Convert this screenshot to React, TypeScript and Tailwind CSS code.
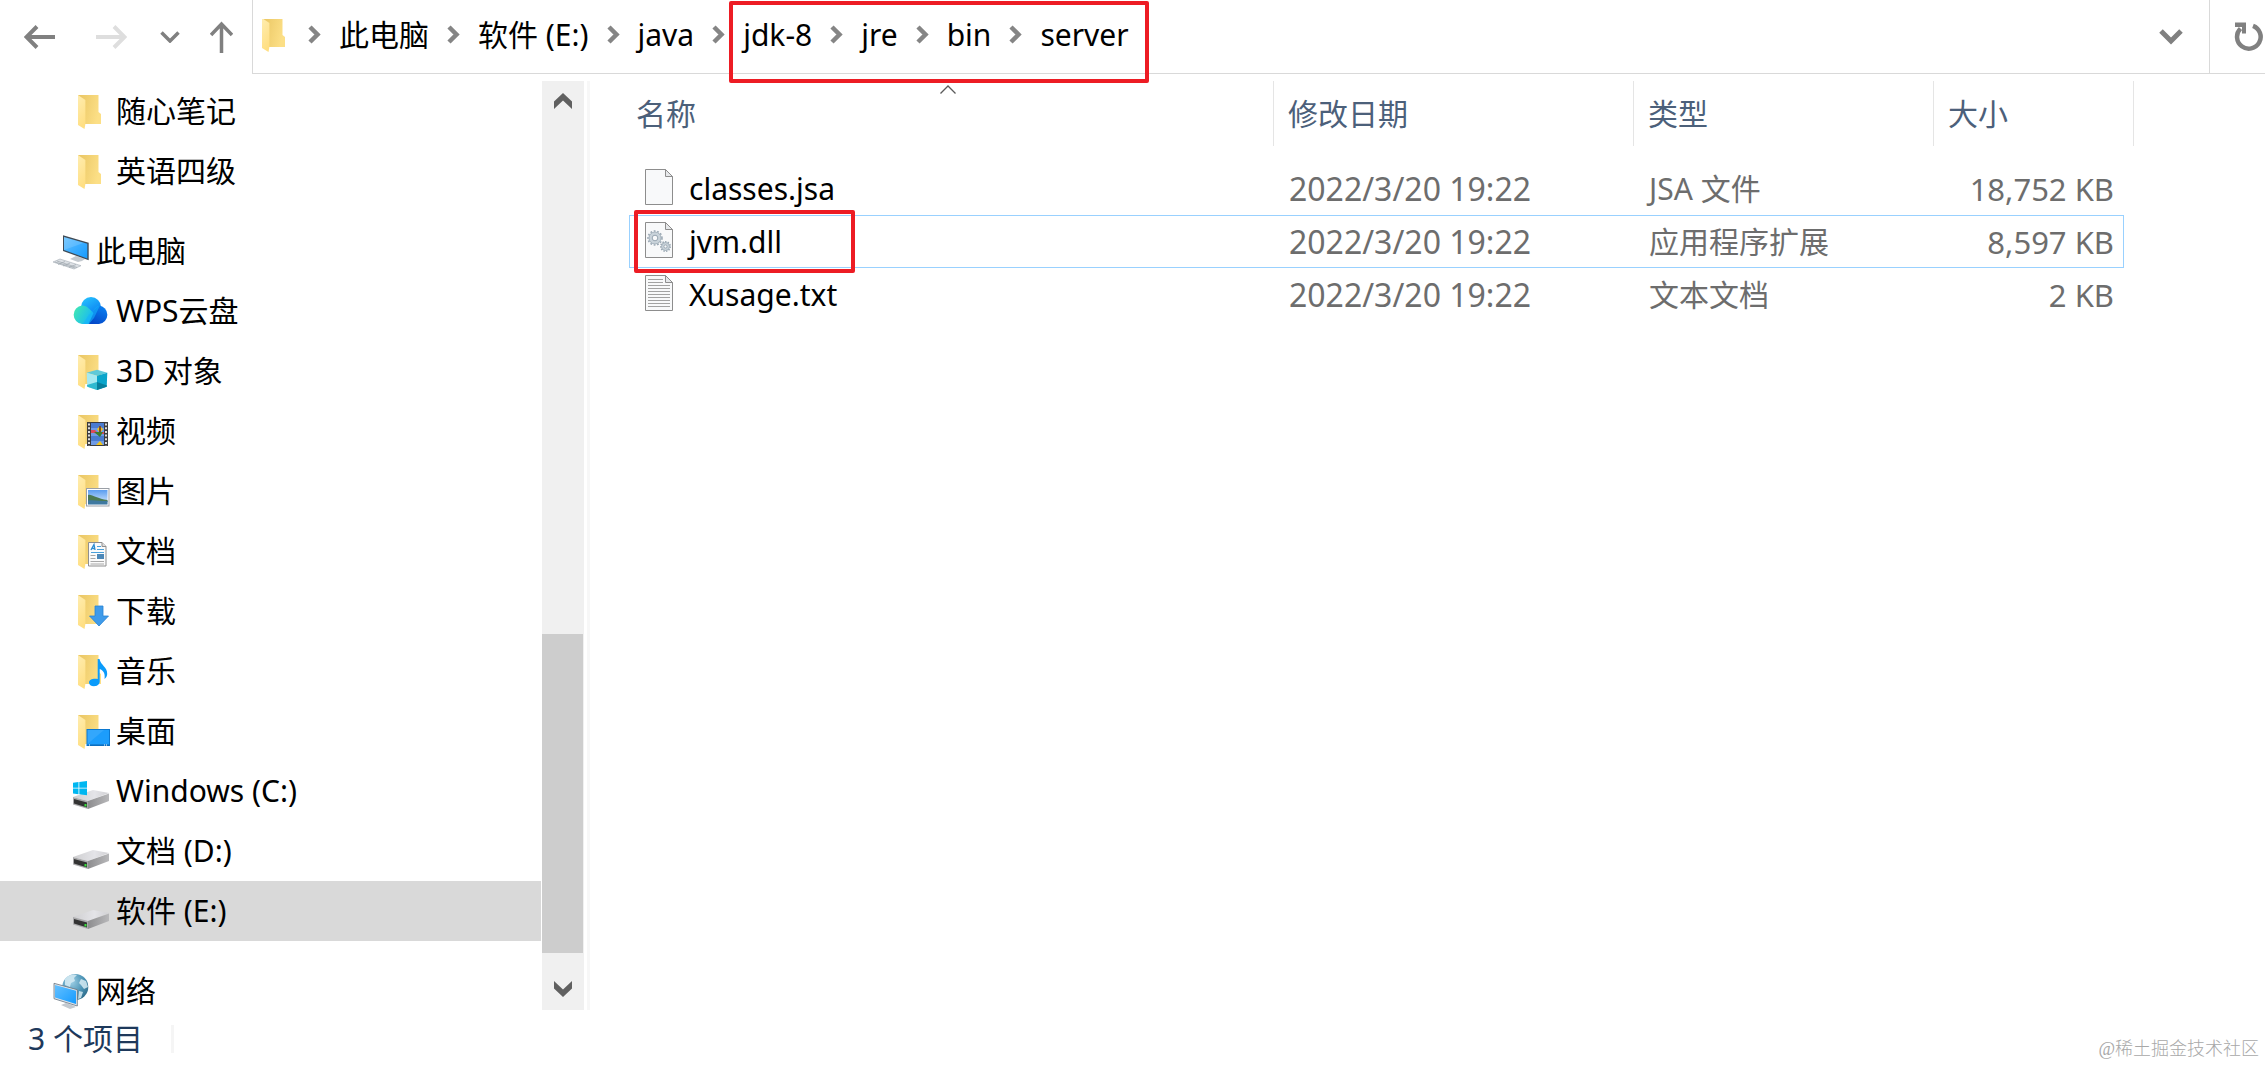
import type { ReactNode } from 'react'
import { clsx } from 'clsx'

type IconName =
  | 'folder'
  | 'pc'
  | 'cloud'
  | 'objects'
  | 'video'
  | 'pictures'
  | 'documents'
  | 'downloads'
  | 'music'
  | 'desktop'
  | 'windows'
  | 'drive'
  | 'network'

interface TreeItem {
  label: string
  icon: IconName
  root?: boolean
  active?: boolean
}

interface FileRow {
  name: string
  kind: 'blank' | 'gears' | 'text'
  date: string
  type: string
  size: string
  focused?: boolean
}

const treeGroups: TreeItem[][] = [
  [
    { label: '随心笔记', icon: 'folder' },
    { label: '英语四级', icon: 'folder' },
  ],
  [
    { label: '此电脑', icon: 'pc', root: true },
    { label: 'WPS云盘', icon: 'cloud' },
    { label: '3D 对象', icon: 'objects' },
    { label: '视频', icon: 'video' },
    { label: '图片', icon: 'pictures' },
    { label: '文档', icon: 'documents' },
    { label: '下载', icon: 'downloads' },
    { label: '音乐', icon: 'music' },
    { label: '桌面', icon: 'desktop' },
    { label: 'Windows (C:)', icon: 'windows' },
    { label: '文档 (D:)', icon: 'drive' },
    { label: '软件 (E:)', icon: 'drive', active: true },
  ],
  [{ label: '网络', icon: 'network', root: true }],
]

const files: FileRow[] = [
  { name: 'classes.jsa', kind: 'blank', date: '2022/3/20 19:22', type: 'JSA 文件', size: '18,752 KB' },
  { name: 'jvm.dll', kind: 'gears', date: '2022/3/20 19:22', type: '应用程序扩展', size: '8,597 KB', focused: true },
  { name: 'Xusage.txt', kind: 'text', date: '2022/3/20 19:22', type: '文本文档', size: '2 KB' },
]

function Gradients() {
  return (
    <svg className="absolute size-0" aria-hidden="true">
      <defs>
        <linearGradient id="flap" x1="0" y1="0" x2="0.3" y2="1">
          <stop offset="0" stopColor="#ffedb0" />
          <stop offset="1" stopColor="#ffdf83" />
        </linearGradient>
        <linearGradient id="back" x1="0" y1="0" x2="1" y2="0.3">
          <stop offset="0" stopColor="#e9c562" />
          <stop offset="1" stopColor="#fcdf86" />
        </linearGradient>
        <linearGradient id="screen" x1="0" y1="0" x2="1" y2="1">
          <stop offset="0" stopColor="#63c0ff" />
          <stop offset="1" stopColor="#159bff" />
        </linearGradient>
        <linearGradient id="cloudTop" x1="0" y1="0" x2="0.6" y2="1">
          <stop offset="0" stopColor="#28c8ff" />
          <stop offset="1" stopColor="#0a7df2" />
        </linearGradient>
        <linearGradient id="cloudRight" x1="1" y1="0" x2="0.4" y2="1">
          <stop offset="0" stopColor="#0a86f5" />
          <stop offset="1" stopColor="#0447c8" />
        </linearGradient>
        <linearGradient id="cloudLeft" x1="0" y1="0.2" x2="1" y2="0.7">
          <stop offset="0" stopColor="#41e8b2" />
          <stop offset="1" stopColor="#14b4fb" />
        </linearGradient>
        <linearGradient id="driveTop" x1="0" y1="0" x2="1" y2="0">
          <stop offset="0" stopColor="#cfcfd1" />
          <stop offset="0.6" stopColor="#e4e4e8" />
          <stop offset="1" stopColor="#d0d0d3" />
        </linearGradient>
        <linearGradient id="driveSide" x1="0" y1="0" x2="1" y2="0">
          <stop offset="0" stopColor="#8d8d8f" />
          <stop offset="1" stopColor="#b8b8ba" />
        </linearGradient>
        <linearGradient id="sky" x1="0" y1="0" x2="0" y2="1">
          <stop offset="0" stopColor="#5a9df0" />
          <stop offset="1" stopColor="#dcecff" />
        </linearGradient>
        <radialGradient id="globe" cx="0.35" cy="0.3" r="0.8">
          <stop offset="0" stopColor="#9fd0e6" />
          <stop offset="0.6" stopColor="#4b93b5" />
          <stop offset="1" stopColor="#2a6784" />
        </radialGradient>
      </defs>
    </svg>
  )
}

function FolderBase({ children }: { children?: ReactNode }) {
  return (
    <>
      <path d="M6 4H26.5V21L29 23V33H13L6 30Z" fill="url(#back)" />
      <path d="M6 4L13.4 9V33L12.5 38L6 34Z" fill="url(#flap)" />
      {children}
    </>
  )
}

function DriveBase() {
  return (
    <>
      <path d="M1 26L21 19L37 22L16 30Z" fill="url(#driveTop)" />
      <path d="M16 30L37 22.5V30L16 38Z" fill="url(#driveSide)" />
      <path d="M1 26L16 30V38L1 33.5Z" fill="#a9a9ab" />
      <path d="M2 28L15 31.5V36.5L2 32.5Z" fill="#333" />
      <rect x="12.5" y="33" width="2" height="2.5" fill="#37e03b" />
    </>
  )
}

const drawings: Record<IconName, ReactNode> = {
  folder: <FolderBase />,
  pc: (
    <>
      <path d="M18 28L24 25L33 28L30 30L26 31Z" fill="#c3c9cf" />
      <path d="M11 4.3L36.7 11.7V29.3L11 20Z" fill="#3f4a55" />
      <path d="M12 6L35.3 12.8V27.4L12 19Z" fill="url(#screen)" />
      <path d="M12 6L32 11.8L12 19Z" fill="#fff" opacity="0.15" />
      <path d="M1 31L8 28L29 34.7L22 38Z" fill="#dde1e5" stroke="#a3abb3" strokeWidth="0.6" />
      <path d="M5 30L25 36.5M3 31L23 37M6 33.5L13 30.5M11 35L18 32M17 36.5L24 33.5" stroke="#9ea6ae" strokeWidth="0.7" />
    </>
  ),
  cloud: (
    <>
      <circle cx="19" cy="16" r="10" fill="url(#cloudTop)" />
      <path d="M27 14.5a9.3 9.3 0 0 1 0 18.5H12l9-13Z" fill="url(#cloudRight)" />
      <path d="M10 14.5c5.5 0 8 4.5 11.5 7.5L16.5 33H10a9.3 9.3 0 0 1 0-18.5Z" fill="url(#cloudLeft)" />
      <path d="M28 14.5C24 14.5 22 19 16 25L11 33H17L22 27Z" fill="#14b0fb" opacity="0.6" />
    </>
  ),
  objects: (
    <FolderBase>
      <path d="M14.7 21.7L25 18.7L35.3 21.7L25 24.7Z" fill="#5fc9d8" />
      <path d="M14.7 21.7L25 24.7V39L15.3 35.7Z" fill="#a6e9f1" />
      <path d="M14.9 34L25 31V39L15.3 35.7Z" fill="#2fb9d0" />
      <path d="M25 24.7L35.3 21.7L34.7 35.7L25 39Z" fill="#0aa5cb" />
      <path d="M25 31L35 34.5L34.7 35.7L25 39Z" fill="#077f9c" />
    </FolderBase>
  ),
  video: (
    <FolderBase>
      <rect x="15" y="11" width="21" height="24" fill="#3c3c3e" />
      <rect x="19" y="12" width="13" height="22" fill="#6f9be6" />
      <path d="M19 12h13v5H19zM19 25h13v5H19z" fill="#4a7bd0" />
      <path d="M17 12.5V35M34 12.5V35" stroke="#dedede" strokeWidth="2" strokeDasharray="2 1.7" />
      <path d="M19 19h4l2 2h7v2h-6l-4-1h-3Z" fill="#e04a5a" />
      <path d="M28 15l3 3-3 4-3-4ZM28 30l3 4h-7Z" fill="#f2c418" />
      <path d="M27 15h2v7h-2ZM22 21h9l-3 5Z" fill="#3e7d2f" />
      <path d="M28 15v6" stroke="#b5301e" strokeWidth="1.2" />
    </FolderBase>
  ),
  pictures: (
    <FolderBase>
      <rect x="14.5" y="17.5" width="22.5" height="17.5" fill="#fff" stroke="#9a9fa6" />
      <rect x="16" y="19" width="19.5" height="14.5" fill="url(#sky)" />
      <path d="M16 24c4-1 9 4 19.5 5v2H16Z" fill="#4c7a52" />
      <path d="M16 29.5c7-1 13 1 19.5 0.5v3.5H16Z" fill="#3f79a0" />
    </FolderBase>
  ),
  documents: (
    <FolderBase>
      <path d="M16.5 11.5H30L34 15.5V35H16.5Z" fill="#fbfbfb" stroke="#8f8f8f" />
      <path d="M30 11.5V15.5H34" fill="#ddd" stroke="#8f8f8f" />
      <path d="M19 19L22 13.5L23 19M20.5 17.5h2" fill="none" stroke="#2b8bd0" strokeWidth="1.3" />
      <path d="M25 15.5h4M25 18.5h7M19 21.5h13" stroke="#4aa0da" />
      <rect x="25" y="23" width="7" height="5" fill="#4c88b8" />
      <path d="M18.5 24.5h5M18.5 27.5h5M18.5 30.5h13.5M18.5 33h13.5" stroke="#a8a8a8" />
    </FolderBase>
  ),
  downloads: (
    <FolderBase>
      <path d="M23 15H31V25H36.5L27 35L17.5 25H23Z" fill="#3f9bea" stroke="#2683d4" strokeWidth="0.8" />
    </FolderBase>
  ),
  music: (
    <FolderBase>
      <path
        d="M25.7 8H27.5C28.5 14 35.5 16 35.2 23C35.1 25 34 27 32.5 28C33.5 22 31 19.5 27.7 18V30.5C27.7 33.5 25 35.2 22 35.2C19 35.2 17 33.8 17 31.5C17 28.8 21 27 25.7 28Z"
        fill="#0a9bfb"
      />
    </FolderBase>
  ),
  desktop: (
    <FolderBase>
      <rect x="15" y="18.5" width="22.5" height="16" fill="#1c9dfc" stroke="#0b78d0" />
      <path d="M15.5 33V19H32Z" fill="#fff" opacity="0.1" />
      <path d="M15.5 34h22" stroke="#0c66b2" />
      <path d="M17 34h1M32 34h1M34 34h1" stroke="#fff" />
    </FolderBase>
  ),
  windows: (
    <>
      <DriveBase />
      <path
        d="M1 11.8L6.5 11V16.7H1ZM7.3 10.9L15 10V16.7H7.3ZM1 17.5H6.5V23.2L1 22.4ZM7.3 17.5H15V24.3L7.3 23.3Z"
        fill="#00b7f1"
      />
    </>
  ),
  drive: <DriveBase />,
  network: (
    <>
      <circle cx="23.3" cy="16" r="13" fill="url(#globe)" />
      <path
        d="M13 8c4-5 9-5 12-4l-3 3 1 3-4 2-1 4-5-2ZM29 8l5 2 2 6-4 2-3-4-2-2ZM27 20l4 1-2 6-3 1Z"
        fill="#d6ebf3"
        opacity="0.85"
      />
      <path d="M9 34L14 32L21 34.5L24 36L18 38Z" fill="#c3c9cf" />
      <path d="M2 12.3L25.3 18.7V35L2 27.7Z" fill="#e0e5ea" stroke="#667480" strokeWidth="0.8" />
      <path d="M3 14L24 19.8V33L3 26.5Z" fill="url(#screen)" />
    </>
  ),
}

function TreeIcon({ name }: { name: IconName }) {
  return (
    <svg viewBox="0 0 40 40" className="size-10 shrink-0" aria-hidden="true">
      {drawings[name]}
    </svg>
  )
}

function FileIcon({ kind }: { kind: FileRow['kind'] }) {
  return (
    <svg viewBox="0 0 28 36" className="h-9 w-7 shrink-0" aria-hidden="true">
      <path d="M0.5 0.5H20.5L27.5 7.5V35.5H0.5Z" fill="#f8f9fa" stroke="#8d8d8d" />
      <path d="M20.5 0.5V7.5H27.5Z" fill="#e6e8ea" stroke="#8d8d8d" />
      {kind === 'gears' && (
        <g fill="none" stroke="#98a6b2">
          <circle cx="10" cy="16" r="4.5" strokeWidth="3.5" stroke="#c9d3da" />
          <circle cx="10" cy="16" r="7" strokeWidth="1.5" strokeDasharray="1.8 1.7" />
          <circle cx="10" cy="16" r="6" strokeWidth="0.7" />
          <circle cx="10" cy="16" r="2.8" />
          <circle cx="20.5" cy="24.5" r="3" strokeWidth="2.5" stroke="#c9d3da" />
          <circle cx="20.5" cy="24.5" r="4.8" strokeWidth="1.4" strokeDasharray="1.4 1.3" />
          <circle cx="20.5" cy="24.5" r="4" strokeWidth="0.7" />
          <circle cx="20.5" cy="24.5" r="1.6" />
        </g>
      )}
      {kind === 'text' && (
        <path
          d="M3 4.5H18M3 7.5H18M3 10.5H25M3 13.5H25M3 16.5H25M3 19.5H25M3 22.5H25M3 25.5H25M3 28.5H25M3 31.5H25"
          stroke="#a2a2a2"
        />
      )}
    </svg>
  )
}

function CrumbArrow() {
  return (
    <svg viewBox="0 0 13 19" className="mx-[18px] h-[19px] w-[13px] shrink-0" aria-hidden="true">
      <path d="M2 2L9.5 9.5L2 17" fill="none" stroke="#858585" strokeWidth="4.5" />
    </svg>
  )
}

function Crumb({ label, last }: { label: string; last?: boolean }) {
  return (
    <li className="flex items-center">
      <button className="whitespace-nowrap">{label}</button>
      {!last && <CrumbArrow />}
    </li>
  )
}

function NavButtons() {
  return (
    <div className="flex w-[252px] shrink-0 items-center pl-6">
      <button aria-label="后退">
        <svg viewBox="0 0 31 24" className="h-6 w-[31px]">
          <path d="M13 1.5L2.5 12L13 22.5M3 12H31" fill="none" stroke="#808080" strokeWidth="4" />
        </svg>
      </button>
      <button aria-label="前进" className="ml-[41px]">
        <svg viewBox="0 0 31 24" className="h-6 w-[31px]">
          <path d="M18 1.5L28.5 12L18 22.5M28 12H0" fill="none" stroke="#dedede" strokeWidth="4" />
        </svg>
      </button>
      <button aria-label="最近浏览的位置" className="ml-[33px]">
        <svg viewBox="0 0 20 12" className="h-3 w-5">
          <path d="M1.5 1.5L10 10L18.5 1.5" fill="none" stroke="#808080" strokeWidth="3.5" />
        </svg>
      </button>
      <button aria-label="向上" className="ml-[30px]">
        <svg viewBox="0 0 23 32" className="h-8 w-[23px]">
          <path d="M1 14L11.5 3L22 14M11.5 3V32" fill="none" stroke="#808080" strokeWidth="3.5" />
        </svg>
      </button>
    </div>
  )
}

function AddressBar() {
  return (
    <div className="flex min-w-0 flex-1 items-center border-b border-l border-[#d9d9d9] pl-2">
      <svg viewBox="5 5 25 36" className="h-9 w-[25px] shrink-0" aria-hidden="true">
        <FolderBase />
      </svg>
      <nav aria-label="地址" className="min-w-0 flex-1 pb-1">
        <ol className="flex items-center text-[30px] leading-10">
          <li className="ml-1 flex">
            <CrumbArrow />
          </li>
          <Crumb label="此电脑" />
          <Crumb label="软件 (E:)" />
          <Crumb label="java" />
          <li className="relative">
            <ol className="flex items-center">
              <Crumb label="jdk-8" />
              <Crumb label="jre" />
              <Crumb label="bin" />
              <Crumb label="server" last />
            </ol>
            <span className="pointer-events-none absolute -top-3.5 -right-5 -bottom-7 -left-3.5 rounded-xs border-4 border-[#ed1c24]" />
          </li>
        </ol>
      </nav>
      <button aria-label="以前的位置" className="mr-[26px]">
        <svg viewBox="0 0 24 16" className="h-4 w-6">
          <path d="M2 2L12 12L22 2" fill="none" stroke="#808080" strokeWidth="5" />
        </svg>
      </button>
      <button aria-label="刷新" className="flex w-14 items-center self-stretch border-l border-[#d9d9d9] pl-6">
        <svg viewBox="0 0 29 29" className="size-[29px]">
          <path d="M19 3.8A11.8 11.8 0 1 1 6.5 6.5" fill="none" stroke="#808080" strokeWidth="4.5" />
          <path d="M1 0.5H12V11.5H8V5H1Z" fill="#808080" />
        </svg>
      </button>
    </div>
  )
}

function Sidebar() {
  return (
    <aside className="flex w-[587px] shrink-0 pr-[3px]">
      <nav aria-label="导航窗格" className="flex min-w-0 flex-1 flex-col gap-5 pr-px">
        {treeGroups.map((group, i) => (
          <ul key={i}>
            {group.map((item) => (
              <li key={item.label}>
                <a
                  href="#"
                  className={clsx(
                    'flex h-[60px] items-center gap-1 text-[30px] leading-9 whitespace-nowrap',
                    item.root ? 'pl-[52px]' : 'pl-[72px]',
                    item.active && 'bg-[#d9d9d9]',
                  )}
                >
                  <TreeIcon name={item.icon} />
                  <span>{item.label}</span>
                </a>
              </li>
            ))}
          </ul>
        ))}
      </nav>
      <div className="flex w-[42px] shrink-0 flex-col bg-[#f0f0f0] pr-px">
        <button aria-label="向上滚动" className="flex h-10 justify-center pt-3">
          <svg viewBox="0 0 18 16" className="h-4 w-[18px]">
            <path d="M9 0L18 8.5V16L9 7.5L0 16V8.5Z" fill="#606060" />
          </svg>
        </button>
        <div className="flex flex-1 flex-col justify-end">
          <div className="h-[38.4%] bg-[#cdcdcd]" />
        </div>
        <button aria-label="向下滚动" className="flex h-[57px] justify-center pt-7">
          <svg viewBox="0 0 18 16" className="h-4 w-[18px]">
            <path d="M9 16L18 7.5V0L9 8.5L0 0V7.5Z" fill="#606060" />
          </svg>
        </button>
      </div>
    </aside>
  )
}

function FileTable() {
  return (
    <table className="w-[1505px] table-fixed border-separate border-spacing-0 text-left text-[30px] leading-10 text-[#6d6d6d]">
      <colgroup>
        <col />
        <col className="w-[360px]" />
        <col className="w-[300px]" />
        <col className="w-[190px]" />
        <col className="w-[10px]" />
      </colgroup>
      <thead className="text-[#4c607a]">
        <tr className="h-[65px] [&>*]:border-[#e5e5e5] [&>*]:p-0 [&>*]:font-normal">
          <th scope="col" aria-sort="ascending" className="relative border-r">
            <button className="pl-[7px]">名称</button>
            <svg viewBox="0 0 16 9" className="absolute top-1 left-[311px] h-[9px] w-4" aria-hidden="true">
              <path d="M0.5 8.5L8 1L15.5 8.5" fill="none" stroke="#5a5a5a" strokeWidth="1.3" />
            </svg>
          </th>
          <th scope="col" className="border-r">
            <button className="pl-3.5">修改日期</button>
          </th>
          <th scope="col" className="border-r">
            <button className="pl-3.5">类型</button>
          </th>
          <th scope="col">
            <button className="pl-3.5">大小</button>
          </th>
          <td className="border-r" />
        </tr>
        <tr className="h-4" />
      </thead>
      <tbody>
        {files.map((file) => (
          <tr
            key={file.name}
            className={clsx(
              'h-[53px] [&>td]:p-0',
              file.focused && '[&>td]:border-[#99d1ff] [&>td:not(:last-child)]:border-y',
            )}
          >
            <td className={clsx('relative', file.focused && 'border-l')}>
              <div className={clsx('flex items-start gap-4 text-black', file.focused ? 'pl-[15px]' : 'pl-4')}>
                <FileIcon kind={file.kind} />
                {file.name}
              </div>
              {file.focused && (
                <span className="pointer-events-none absolute -top-1.5 -bottom-1.5 left-1 w-[221px] rounded-xs border-4 border-[#ed1c24]" />
              )}
            </td>
            <td className="text-[32px]">
              <span className="pl-[15px]">{file.date}</span>
            </td>
            <td>
              <span className="pl-[15px]">{file.type}</span>
            </td>
            <td className={clsx('text-right text-[31px]', file.focused && 'border-r')}>
              <span className={file.focused ? 'pr-[9px]' : 'pr-2.5'}>{file.size}</span>
            </td>
            <td />
          </tr>
        ))}
      </tbody>
    </table>
  )
}

export default function App() {
  return (
    <div className="flex h-screen flex-col overflow-hidden bg-white font-['Noto_Sans','Noto_Sans_CJK_SC',sans-serif] text-black">
      <Gradients />
      <header className="flex h-[74px] shrink-0">
        <NavButtons />
        <AddressBar />
      </header>
      <main className="mt-[7px] flex min-h-0 flex-1">
        <Sidebar />
        <section aria-label="文件列表" className="min-w-0 flex-1 border-l-3 border-[#f7f7f7] pl-[39px]">
          <FileTable />
        </section>
      </main>
      <footer className="flex h-[57px] shrink-0 items-center justify-between pr-1.5 pl-7 text-[#1e395b]">
        <p className="flex items-center text-[30px] leading-10">
          3 个项目
          <span className="ml-7 h-7 w-[3px] bg-[#f5f5f5]" />
        </p>
        <p className="self-end pb-1 font-['Liberation_Serif','Noto_Sans_CJK_SC',serif] text-lg font-light text-[#a8a8a8]">
          @稀土掘金技术社区
        </p>
      </footer>
    </div>
  )
}
